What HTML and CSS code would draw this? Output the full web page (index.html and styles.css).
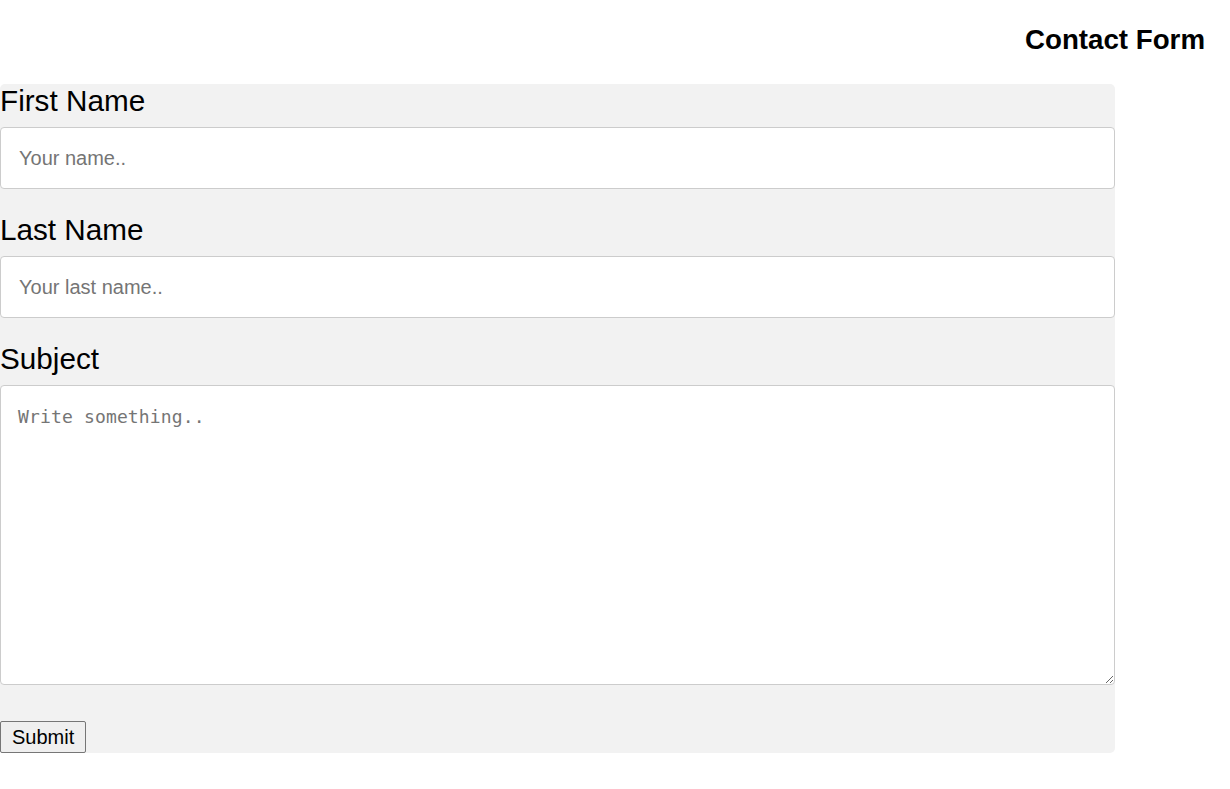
FILE: index.html
```html
<!DOCTYPE html>
<html lang="en">
<head>
<meta charset="utf-8">
<title>Contact Form</title>
<link rel="stylesheet" href="styles.css">
</head>
<body>
<h1 class="title">Contact Form</h1>
<div class="container">
  <form class="form">
    <label class="label" for="fname">First Name</label>
    <input class="field" type="text" id="fname" placeholder="Your name..">
    <label class="label" for="lname">Last Name</label>
    <input class="field" type="text" id="lname" placeholder="Your last name..">
    <label class="label" for="subject">Subject</label>
    <textarea class="field area" id="subject" placeholder="Write something.."></textarea>
    <button class="submit" type="submit">Submit</button>
  </form>
</div>
</body>
</html>
```
FILE: styles.css
```css
html, body {
  margin: 0;
  padding: 0;
  background: #ffffff;
  font-family: "Liberation Sans", Arial, sans-serif;
  color: #000;
}

.title {
  margin: 24px 25px 28px 0;
  font-size: 27.7px;
  font-weight: bold;
  text-align: right;
  line-height: 32px;
}

.container {
  width: 1115px;
  background: #f2f2f2;
  border-radius: 5px;
}

.form {
  margin: 0;
  display: flex;
  flex-direction: column;
  align-items: flex-start;
}

.label {
  display: block;
  font-size: 29.7px;
  line-height: 33px;
  margin-bottom: 2px;
}

.field {
  box-sizing: border-box;
  display: block;
  width: 100%;
  height: 62px;
  margin: 8px 0 24px;
  padding: 0 18px;
  border: 1px solid #cccccc;
  border-radius: 4px;
  background: #ffffff;
  font-family: "Liberation Sans", Arial, sans-serif;
  font-size: 20px;
  color: #000;
}

.field::placeholder {
  color: #757575;
}

.area {
  height: 300px;
  padding: 20px 17px;
  margin-bottom: 36px;
  font-family: "DejaVu Sans Mono", monospace;
  font-size: 18px;
  letter-spacing: 0.15px;
  resize: vertical;
}

.submit {
  margin: 0;
  padding: 4px 11px;
  height: 32px;
  border: 1px solid #767676;
  border-radius: 2px;
  background: #efefef;
  font-family: "Liberation Sans", Arial, sans-serif;
  font-size: 20px;
  color: #000;
  line-height: 22px;
}
```
